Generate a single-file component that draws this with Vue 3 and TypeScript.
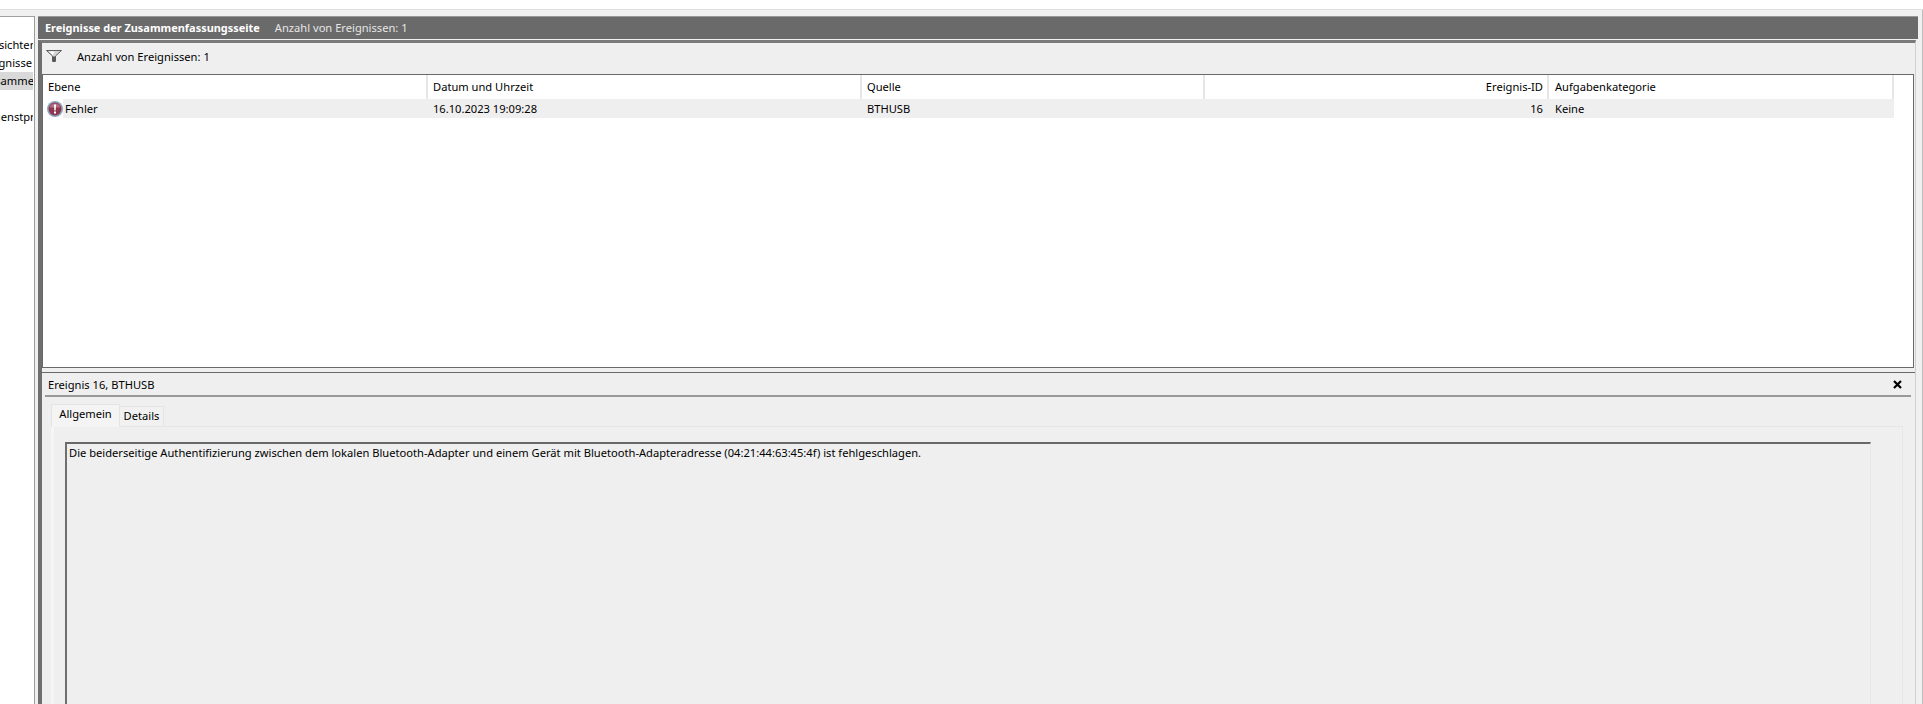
<script setup lang="ts">
interface TreeRow {
  label: string
  offset: number
  selected?: boolean
}

// Baum ist nach rechts gescrollt, daher ein Versatz pro Zeile
const treeRows: TreeRow[] = [
  { label: 'Benutzerdefinierte Ansichten', offset: -116 },
  { label: 'Administrative Ereignisse', offset: -100 },
  { label: 'Zusammenfassungsseiten-Ereignisse', offset: -18, selected: true },
  { label: '', offset: 0 },
  { label: 'Anwendungs- und Dienstprotokolle', offset: -109 },
]

const columns = [
  { title: 'Ebene', width: 385 },
  { title: 'Datum und Uhrzeit', width: 434 },
  { title: 'Quelle', width: 343 },
  { title: 'Ereignis-ID', width: 344, right: true },
  { title: 'Aufgabenkategorie', width: 345, last: true },
]

const row = ['Fehler', '16.10.2023 19:09:28', 'BTHUSB', '16', 'Keine']
</script>

<template>
  <div class="window">
    <div class="top-strip"></div>
    <div class="shell">
      <aside class="tree">
        <div
          v-for="(item, i) in treeRows"
          :key="i"
          :class="['tree-row', { selected: item.selected }]"
        >
          <span :style="{ marginLeft: item.offset + 'px' }">{{ item.label }}</span>
        </div>
      </aside>

      <main class="main">
        <header class="title-bar">
          <strong>Ereignisse der Zusammenfassungsseite</strong>
          <span>Anzahl von Ereignissen: 1</span>
        </header>

        <div class="content">
          <div class="filter-bar">
            <svg class="funnel" width="16" height="12" viewBox="0 0 16 12">
              <path d="M.5.5h15L9.5 6v5.5h-3V6z" fill="#d4d4d4" stroke="#5c5c5c" />
              <path d="M3 1.5h5.5L7 5z" fill="#fff" />
              <path d="M7 6.5h2v4.5H7z" fill="#555" />
            </svg>
            <span>Anzahl von Ereignissen: 1</span>
          </div>

          <section class="list">
            <div class="list-head">
              <div
                v-for="col in columns"
                :key="col.title"
                :class="['head-cell', { right: col.right, last: col.last }]"
                :style="{ width: col.width + 'px' }"
              >{{ col.title }}</div>
            </div>
            <div class="list-row">
              <div
                v-for="(text, i) in row"
                :key="i"
                :class="['row-cell', { right: columns[i].right, last: columns[i].last, first: i === 0 }]"
                :style="{ width: columns[i].width + 'px' }"
              >
                <svg v-if="i === 0" class="err-icon" width="16" height="16" viewBox="0 0 16 16">
                  <circle cx="8" cy="8" r="8" fill="#8ea5bc" />
                  <circle cx="8" cy="8" r="6.4" fill="#8d3650" />
                  <path d="M2.6 6.5a5.6 5.6 0 0 1 10.8 0z" fill="#b46f80" />
                  <path d="M7 3.5h2l-.3 6h-1.4z" fill="#fff" />
                  <rect x="7" y="10.5" width="2" height="2" fill="#fff" />
                </svg>
                <span class="cell-text">{{ text }}</span>
              </div>
            </div>
          </section>

          <section class="detail">
            <div class="detail-head">
              <span>Ereignis 16, BTHUSB</span>
              <svg class="close" width="9" height="9" viewBox="0 0 9 9">
                <path d="M1 1l7 7M8 1L1 8" stroke="#000" stroke-width="2.2" fill="none" />
              </svg>
            </div>
            <div class="tabs">
              <div class="tab active">Allgemein</div>
              <div class="tab">Details</div>
            </div>
            <div class="tab-panel">
              <div class="message">
                Die beiderseitige Authentifizierung zwischen dem lokalen Bluetooth-Adapter und einem Gerät mit Bluetooth-Adapteradresse (04:21:44:63:45:4f) ist fehlgeschlagen.
              </div>
            </div>
          </section>
        </div>
      </main>
    </div>
  </div>
</template>

<style scoped>
.window {
  display: flex;
  flex-direction: column;
  width: 1923px;
  height: 704px;
  overflow: hidden;
  background: #fff;
  color: #000;
  font-family: "Noto Sans", "Open Sans", sans-serif;
  font-size: 11.15px;
}

.top-strip {
  flex: none;
  height: 9px;
  border-bottom: 1px solid #dfdfdf;
}

.shell {
  flex: 1;
  min-height: 0;
  display: flex;
  padding: 6px 4px 0 0;
  background: #f0f0f0;
  border-right: 1px solid #bdbdbd;
}

.tree {
  flex: none;
  width: 34px;
  padding-top: 19px;
  background: #fff;
  border-top: 1px solid #a0a0a0;
  border-right: 1px solid #9c9c9c;
  overflow: hidden;
}

.tree-row {
  height: 18px;
  line-height: 18px;
  white-space: nowrap;
  overflow: hidden;
  margin-right: 1px;
}

.tree-row.selected {
  background: #d9d9d9;
}

.main {
  flex: 1;
  min-width: 0;
  margin-left: 3px;
  display: flex;
  flex-direction: column;
}

.title-bar {
  flex: none;
  height: 22px;
  display: flex;
  align-items: center;
  gap: 15px;
  padding-left: 7px;
  box-sizing: content-box;
  background: #6a6a6a;
  border-top: 1px solid #999;
  color: #fff;
  line-height: 20px;
}

.title-bar strong {
  font-size: 10.95px;
  margin-bottom: 1px;
}

.title-bar span {
  color: #e6e6e6;
  margin-bottom: 1px;
}

.content {
  flex: 1;
  min-height: 0;
  display: flex;
  flex-direction: column;
  margin-top: 1px;
  margin-right: 2px;
  background: #efefef;
  border-top: 3px solid #7a7a7a;
  border-left: 4px solid #6f6f6f;
  border-right: 1px solid #d0d0d0;
}

.filter-bar {
  flex: none;
  height: 26px;
  padding: 0 0 5px 4px;
  display: flex;
  align-items: center;
  gap: 15px;
}

.list {
  flex: none;
  height: 292px;
  margin-right: 1px;
  background: #fff;
  border: 1px solid #696969;
}

.list-head {
  display: flex;
  height: 24px;
}

.head-cell {
  flex: none;
  padding: 0 5px;
  line-height: 24px;
  border-right: 2px solid #e6e6e6;
  box-sizing: border-box;
}

.head-cell.right {
  text-align: right;
  padding-right: 4px;
}

.list-row {
  display: flex;
  height: 19px;
}

.row-cell {
  flex: none;
  box-sizing: border-box;
  padding: 0 5px;
  line-height: 19px;
  background: #efefef;
  white-space: nowrap;
}

.row-cell.right {
  text-align: right;
  padding-right: 6px;
}

.head-cell.last,
.row-cell.last {
  padding-left: 6px;
}

.row-cell.first {
  display: flex;
  align-items: center;
  padding: 0;
  background: linear-gradient(to right, #fff 20px, #efefef 20px);
}

.err-icon {
  flex: none;
  margin: 1px 2px 0 4px;
}

.detail {
  flex: 1;
  min-height: 0;
  display: flex;
  flex-direction: column;
  margin: 4px 0 0 -2px;
  border-top: 1px solid #696969;
}

.detail-head {
  flex: none;
  height: 22px;
  margin: 0 4px 0 5px;
  padding-left: 3px;
  display: flex;
  align-items: center;
  justify-content: space-between;
  border-bottom: 2px solid #999;
}

.close {
  margin-right: 9px;
}

.tabs {
  flex: none;
  display: flex;
  align-items: flex-end;
  height: 30px;
  margin: 0 0 -1px 11px;
  position: relative;
  z-index: 1;
}

.tab {
  width: 43px;
  height: 19px;
  line-height: 18px;
  text-align: center;
  background: #f1f1f1;
  border: 1px solid #e4e4e4;
  border-left: 0;
  border-bottom: 0;
  margin-bottom: 1px;
}

.tab.active {
  width: 67px;
  height: 22px;
  line-height: 18px;
  background: #f4f4f4;
  border-left: 1px solid #e4e4e4;
  margin-bottom: 0;
}

.tab-panel {
  flex: 1;
  min-height: 0;
  margin: 0 12px 0 11px;
  padding: 15px 31px 0 11px;
  border-top: 1px solid #e6e6e6;
  border-right: 1px solid #e6e6e6;
  border-left: 3px solid #f5f5f5;
}

.message {
  height: 100%;
  padding: 0 2px;
  line-height: 18px;
  border-top: 2px solid #696969;
  border-left: 2px solid #6f6f6f;
  border-right: 1px solid #e8e8e8;
}
</style>
